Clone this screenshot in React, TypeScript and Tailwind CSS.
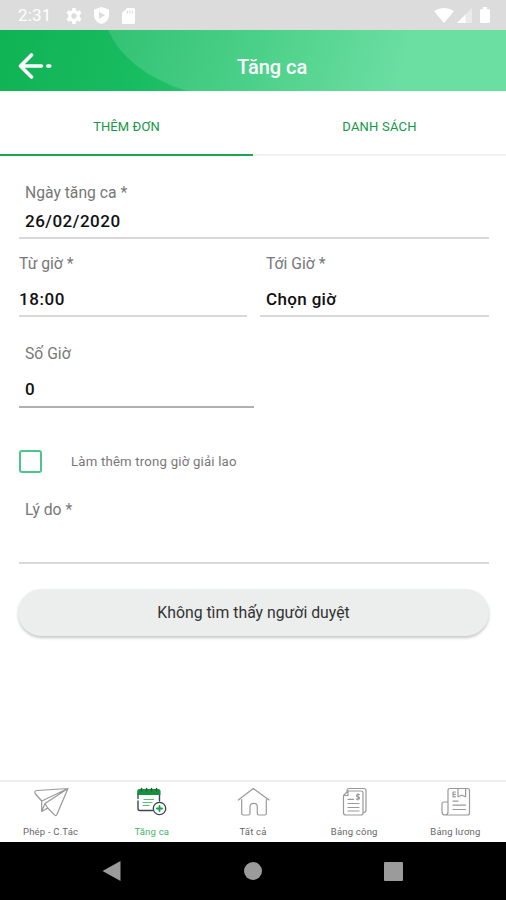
import type { ReactNode } from "react";
import { clsx } from "clsx";

function StatusBar() {
  return (
    <div className="flex h-[30px] shrink-0 items-center justify-between bg-[#dcdcdc] pl-[18px] pr-[16px] text-white">
      <div className="flex items-center pt-px">
        <span className="w-[48px] text-[17px] leading-[29px] tracking-[0.2px]">2:31</span>
        <svg width="16" height="16" viewBox="0 0 24 24" fill="currentColor">
          <path
            fillRule="evenodd"
            d="M9.500 0h5l.6 3.600 2.200 1.200 3.400-1.300 2.500 4.300-2.800 2.300v3.800l2.800 2.300-2.500 4.300-3.400-1.300-2.200 1.200-.6 3.600h-5l-.6-3.600-2.200-1.200-3.400 1.300L.8 16.200l2.800-2.300v-3.800L.8 7.800l2.500-4.300 3.400 1.300 2.200-1.200zM12 8a4 4 0 1 0 0 8 4 4 0 0 0 0-8z"
          />
        </svg>
        <svg className="ml-[12px]" width="15" height="17" viewBox="0 0 15 17" fill="currentColor">
          <path fillRule="evenodd" d="M7.500 0 15 2.500v5.500c0 4.500-3.200 7.800-7.500 9C3.200 15.800 0 12.500 0 8V2.500zM5 4.800v7l6-3.500z" />
        </svg>
        <svg className="ml-[13px]" width="13" height="16" viewBox="0 0 13 16" fill="currentColor">
          <path fillRule="evenodd" d="M5 0h6.500Q13 0 13 1.500v13q0 1.500-1.500 1.500h-10Q0 16 0 14.500V5zM5 2.500v3h1.200v-3zm2.400 0v3h1.200v-3zm2.400 0v3H11v-3z" />
        </svg>
      </div>
      <div className="flex items-center">
        <svg width="20" height="15" viewBox="0 0 20 15" fill="currentColor">
          <path d="M0 3Q10-3 20 3L10 15z" />
        </svg>
        <svg className="ml-[3px]" width="15" height="15" viewBox="0 0 15 15" fill="currentColor">
          <path opacity=".4" d="M15 0v15H0z" />
          <path d="M8.500 6.500V15H0z" />
        </svg>
        <svg className="ml-[8px]" width="10" height="16" viewBox="0 0 10 16" fill="currentColor">
          <path d="M3 0h4v2h1.500Q10 2 10 3.500v11Q10 16 8.500 16h-7Q0 16 0 14.500v-11Q0 2 1.500 2H3z" />
        </svg>
      </div>
    </div>
  );
}

function Header() {
  return (
    <header className="relative h-[61px] shrink-0 overflow-hidden bg-[linear-gradient(100deg,#10b353_0%,#19bd62_30%,#48cd80_60%)]">
      <svg className="absolute inset-0" width="506" height="61" viewBox="0 0 506 61">
        <defs>
          <linearGradient id="swoosh" gradientUnits="userSpaceOnUse" x1="110" y1="0" x2="390" y2="80">
            <stop offset="0" stopColor="#33c274" />
            <stop offset=".5" stopColor="#4bd088" />
            <stop offset="1" stopColor="#6bdea2" />
          </linearGradient>
        </defs>
        <path d="M108 0Q127 42 187 61H506V0z" fill="url(#swoosh)" />
      </svg>
      <div className="relative flex h-full items-center">
        <svg className="ml-[18px] mt-[10px]" width="34" height="26" viewBox="0 0 34 26" fill="none" stroke="white" strokeWidth="3.600" strokeLinecap="round" strokeLinejoin="round">
          <path d="M13.500 2 2.500 13l11 11M3 13h20.500M29.800 13h2" />
        </svg>
        <h1 className="mt-[13px] ml-[185px] text-[20px] leading-6 font-medium text-white">Tăng ca</h1>
      </div>
    </header>
  );
}

function Tabs() {
  return (
    <div className="flex h-[65px] shrink-0 bg-white text-[13px] text-[#149844]">
      <div className="flex flex-1 items-center justify-center border-b-2 border-[#1ca653] pt-[9px]">
        <span className="tracking-[0.1px]">THÊM ĐƠN</span>
      </div>
      <div className="flex flex-1 items-center justify-center border-b-2 border-[#f1f1f1] pt-[9px]">
        <span className="tracking-[0.2px]">DANH SÁCH</span>
      </div>
    </div>
  );
}

type FieldProps = {
  label: string;
  value?: string;
  className?: string;
  valueClassName?: string;
  borderClassName?: string;
};

function Field({ label, value, className, valueClassName, borderClassName = "border-[#d9d9d9]" }: FieldProps) {
  return (
    <div className={clsx("flex flex-col justify-between border-b-2", borderClassName, className)}>
      <label className="text-[15.700px] leading-5 text-[#777]">{label}</label>
      <div className={clsx("text-[17px] leading-5 font-medium text-[#111]", valueClassName)}>{value}</div>
    </div>
  );
}

function OvertimeForm() {
  return (
    <main className="flex-1 bg-white pl-[19px] pr-[17px] pt-[27px]">
      <Field label="Ngày tăng ca *" value="26/02/2020" className="h-[56px] pb-[6px] pl-[6px]" valueClassName="tracking-[0.5px]" />
      <div className="mt-[15px] flex gap-[13px]">
        <Field label="Từ giờ *" value="18:00" className="h-[63px] w-[228px] pb-[6px]" valueClassName="tracking-[0.6px]" />
        <Field label="Tới Giờ *" value="Chọn giờ" className="h-[63px] flex-1 pb-[6px] pl-[6px]" valueClassName="tracking-[0.35px]" />
      </div>
      <Field label="Số Giờ" value="0" className="mt-[27px] h-[64px] w-[235px] pb-[7px] pl-[6px]" borderClassName="border-[#b0b0b0]" />
      <div className="mt-[42px] flex h-[23px] items-center">
        <div className="h-[23px] w-[23px] rounded-[3px] border-2 border-[#4cc58c]" />
        <span className="ml-[29px] mt-px text-[13.200px] tracking-[0.2px] text-[#777]">Làm thêm trong giờ giải lao</span>
      </div>
      <Field label="Lý do *" className="mt-[27px] h-[64px] pl-[6px]" />
      <button className="mt-[25px] -ml-px h-[47px] w-[471px] rounded-full bg-[#eceeed] pt-px text-[15.800px] text-[#333] shadow-[0_2px_3px_rgba(0,0,0,0.22)]">
        Không tìm thấy người duyệt
      </button>
    </main>
  );
}

function Icon({ children }: { children: ReactNode }) {
  return (
    <svg width="36" height="32" viewBox="0 0 36 32" fill="none" stroke="#999" strokeWidth="1.200" strokeLinecap="round" strokeLinejoin="round">
      {children}
    </svg>
  );
}

const navItems = [
  {
    label: "Phép - C.Tác",
    icon: (
      <Icon>
        <path d="M35 2.500 4 4.500Q.5 5 2.500 8l6.200 7v10.500l6-3.500 7.300 7.300q1.200.8 1.900-.8zM35 2.500 8.700 15M35 2.500 12 17.500l-3.300 8M12 17.500l2.700 4.500" />
      </Icon>
    ),
  },
  {
    label: "Tăng ca",
    active: true,
    icon: (
      <Icon>
        <path d="M4 8v4.500M4 15v7.500q0 2 2 2h12.500M25.500 8v7" stroke="#3d4a55" strokeWidth="1.400" />
        <path d="M5.500 3.500H24q2 0 2 2v2.800H3.800V5.200q0-1.700 1.700-1.700z" fill="#16923f" stroke="#16923f" />
        <path d="M7.500 2.500v2.300M12.500 2.500v2.300M17.500 2.500v2.300M22.500 2.500v2.300" stroke="#285b3a" strokeWidth="1.500" />
        <path d="M10 13.500h9.500M9 16.500h9M9 19.500h6" stroke="#5dbd7b" />
        <circle cx="25.500" cy="22.500" r="6.200" fill="white" stroke="#34444d" strokeWidth="1.300" />
        <path d="M25.500 19.900v5.200M22.900 22.500h5.200" stroke="#16a348" strokeWidth="1.800" />
      </Icon>
    ),
  },
  {
    label: "Tất cả",
    icon: (
      <Icon>
        <path d="M3.300 14 18.300 2.500 34 14M6.700 13.500V27.500q0 1.500 1.500 1.500h5.300q1.500 0 1.500-1.500V21q0-3.700 3.700-3.700t3.600 3.700v6.500q0 1.500 1.500 1.500h6q1.500 0 1.500-1.500V13.500" />
      </Icon>
    ),
  },
  {
    label: "Bảng công",
    icon: (
      <Icon>
        <path d="M12 5h13q2 0 2 2v20q0 2-2 2H10q-2.500 0-2.500-2V9.500zM12 5v4.500H7.500M11 5q0-2.500 2-2.500h15q2 0 2 2V24q0 2.500-2.500 2.500" />
        <path d="M12 13.300h5.500M12 17.500h11M12 21.500h11M12 25h11" />
        <path d="M23.500 8.500h-1.800q-1.200 0-1.200 1.100t1.500 1.200 1.500 1.200-1.200 1.200h-1.800M22 7.500v6.500" />
      </Icon>
    ),
  },
  {
    label: "Bảng lương",
    icon: (
      <Icon>
        <path d="M11 26V4.500q0-2 2-2h17.500q2 0 2 2V27q0 2-2 2H8q-3 0-3-3V17.500q0-1.500 1.500-1.500H11M11 26q0 3-3 3" />
        <path d="M21 2.500v8.200l3.800-1.500 3.800 1.500V2.500M18.500 6H16v4.800h2.500M16 8.400h2.300M16 15.200h5M16 19.200h12.500M16 23.500h12.500" />
      </Icon>
    ),
  },
];

function BottomNav() {
  return (
    <nav className="flex h-[62px] shrink-0 border-t-2 border-[#eee] bg-white">
      {navItems.map((item) => (
        <div key={item.label} className="flex flex-1 flex-col items-center pt-[4px]">
          {item.icon}
          <span className={clsx("mt-[8px] text-[9.500px] leading-3 tracking-[0.2px]", item.active ? "text-[#42b768]" : "text-[#666]")}>{item.label}</span>
        </div>
      ))}
    </nav>
  );
}

function SystemBar() {
  return (
    <div className="flex h-[58px] shrink-0 items-center justify-between bg-black pl-[102px] pr-[103px]">
      <svg width="19" height="22" viewBox="0 0 19 22" fill="#9b9b9b">
        <path d="M18.500 1v20L.5 11z" />
      </svg>
      <div className="h-[18px] w-[18px] rounded-full bg-[#9b9b9b]" />
      <div className="h-[19px] w-[19px] rounded-[1px] bg-[#9b9b9b]" />
    </div>
  );
}

export default function App() {
  return (
    <div className="flex h-[900px] w-[506px] flex-col overflow-hidden bg-white font-[Roboto,sans-serif]">
      <StatusBar />
      <Header />
      <Tabs />
      <OvertimeForm />
      <BottomNav />
      <SystemBar />
    </div>
  );
}
